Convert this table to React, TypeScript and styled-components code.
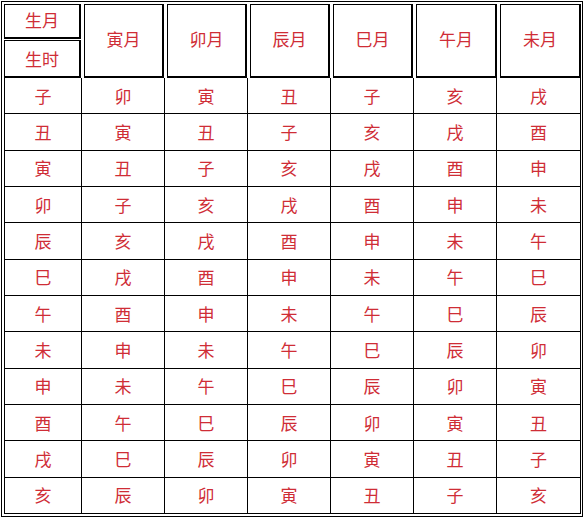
import React from "react";
import styled, { createGlobalStyle } from "styled-components";

const Global = createGlobalStyle`
  html, body { margin: 0; padding: 0; background: #ffffff; }
  body { font-family: "Noto Sans CJK SC", "Liberation Serif", serif; }
`;

const Frame = styled.div`
  margin: 1px 0 0 1px;
  border: 1px solid #000;
  padding: 2px 0 2px 2px;
  box-sizing: border-box;
  width: 582px;
`;

const Header = styled.div`
  display: grid;
  grid-template-columns: 77px 80px 80px 80px 80px 81px 81px;
  column-gap: 3px;
  height: 74px;
`;

const HeadCell = styled.div<{ $lift?: boolean }>`
  border: 1px solid #000;
  border-bottom-width: 2px;
  border-right-width: 2px;
  box-sizing: border-box;
  display: flex;
  align-items: center;
  justify-content: center;
  padding-bottom: ${(p) => (p.$lift ? "4px" : "0")};
  color: #cf2d36;
  font-size: 17px;
  line-height: 1;
`;

const Corner = styled.div`
  display: grid;
  grid-template-rows: 35px 38px;
  row-gap: 1px;
`;

const Body = styled.div`
  display: grid;
  grid-template-columns: 78px 83px 83px 83px 83px 83px 84px;
  grid-template-rows: repeat(12, 1fr);
  height: 436px;
`;

const Cell = styled.div<{ $first?: boolean }>`
  border-right: 1px solid #000;
  border-bottom: 1px solid #000;
  border-left: ${(p) => (p.$first ? "1px solid #000" : "none")};
  box-sizing: border-box;
  display: flex;
  align-items: center;
  justify-content: center;
  padding-bottom: 1px;
  color: #cf2d36;
  font-size: 17px;
  line-height: 1;
`;

const heads = ["寅月", "卯月", "辰月", "巳月", "午月", "未月"];

const rows = [
  "子卯寅丑子亥戌",
  "丑寅丑子亥戌酉",
  "寅丑子亥戌酉申",
  "卯子亥戌酉申未",
  "辰亥戌酉申未午",
  "巳戌酉申未午巳",
  "午酉申未午巳辰",
  "未申未午巳辰卯",
  "申未午巳辰卯寅",
  "酉午巳辰卯寅丑",
  "戌巳辰卯寅丑子",
  "亥辰卯寅丑子亥",
];

export default function App() {
  return (
    <>
      <Global />
      <Frame>
        <Header>
          <Corner>
            <HeadCell $lift>生月</HeadCell>
            <HeadCell>生时</HeadCell>
          </Corner>
          {heads.map((h) => (
            <HeadCell key={h} $lift>
              {h}
            </HeadCell>
          ))}
        </Header>
        <Body>
          {rows.map((r, i) =>
            Array.from(r).map((ch, j) => (
              <Cell key={`${i}-${j}`} $first={j === 0}>
                {ch}
              </Cell>
            ))
          )}
        </Body>
      </Frame>
    </>
  );
}
